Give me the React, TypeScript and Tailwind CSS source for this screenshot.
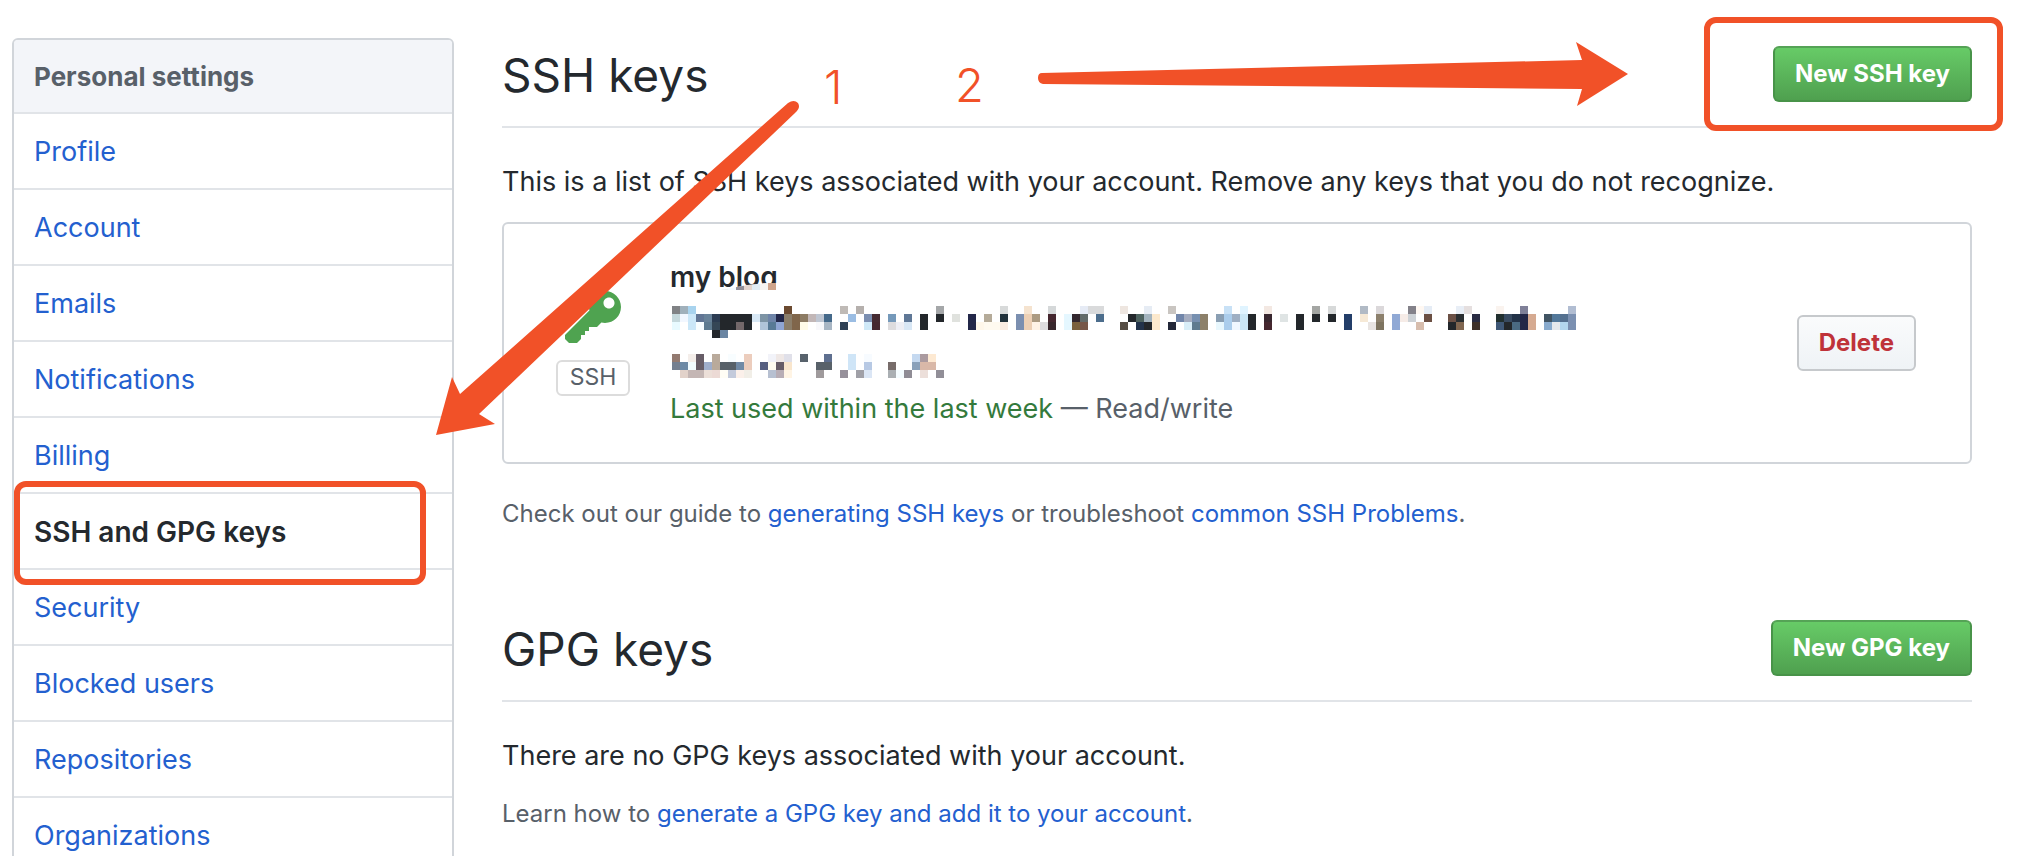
import type { ReactNode } from 'react';

const NAV = [
  'Profile',
  'Account',
  'Emails',
  'Notifications',
  'Billing',
  'SSH and GPG keys',
  'Security',
  'Blocked users',
  'Repositories',
  'Organizations',
];

const CELL = 8;

/* Each row lists "column colour" pairs; "a-b colour" fills a run of cells. */
const FINGERPRINT_ROWS = [
  '0 808285,1 a0b0bb,2 a8d3ee,14 6b4a30,21 bfbab6,23 b5b0ad,33 a5a7a9,41 d8dada,44 f5e3cf,47 d5d8d9,51 e6ebf5,52-53 d9dadb,56 eee6e0,59 e6ecf4,62 c9c5c1,69 c8e1f6,71 e0f4ff,74 f3e8e2,80 a4a6a3,82 d7d9d9,86 b1bac5,88 dbd8da,92 838189,93 fff8f2,94 e5ecf5,98 e8eef6,99 e5dfdf,103 faf3ee,106 7f8098,112 b1bdd2',
  '0 c5d8dc,1 f2f7ff,2 cbe7f8,3 617594,4 688299,5 2c3c52,6-9 23272b,10 d8e8f5,11 7d94a5,12 6e84a8,13 23284a,14 8b7e6a,15 80664b,16 8c7b63,17 c2b7b7,18 bfc6d2,19 45698a,22 9bbde3,24 7b8eb0,25 452a31,27 7599ba,29 5f7796,31 23272b,33 23272b,35 e0e2de,37 232849,39 b5ab99,41 21323c,43 7b8fb0,44 edd0b5,45 ac9b82,47 45272f,49 e5f7ff,50 33272e,51 636b69,53 4c6d8c,57 23272b,58 4d625f,59 a2b3be,60 fce9cd,63 7186aa,64 a5adc0,65 7790b0,66 8c806a,68 8a9fb3,69 abcdec,70 9fafc3,71 cbe7f6,72 23272b,74 38272f,76 dfe4e4,78 23272b,80 23272b,82 23272b,84 233e69,86 f6e9d6,88 8c806c,90 90a9d5,91 f6ece7,92 cdd2d6,94 6b4f43,97 6b5045,98 2a2e31,100 292b42,103 22302f,104 384a60,105 223248,106 232747,107 d5aa91,109 415463,110 53789a,111 54708f,112 7b90b1',
  '0 e8faff,2 cbe7f8,3 f8fdff,4 5f7b91,5 354656,6-7 23272b,8 73686a,9 23272b,11 b0c4d9,12 587a96,13 8fa5d3,14 8b7e6a,15 80664b,16 fffbe8,18 f8f8fb,19 a8b6c4,21 2d4056,24 cfe9f8,25 45272f,27 dddcde,28 eeeff5,29 d8e7f5,31 23272b,37 232849,38 fff7ea,39-40 fffaf0,41 f8ebe2,43 7b8fb0,44 edd0b5,45 fff3e6,46 dedcde,47 38272c,49 e5f7ff,50 7a603d,51 775748,56 564e45,58 22334b,59 23272b,60 fce9cd,62 232839,64 d9eef8,65 5f7b8f,66 8c806a,68 e8f7fd,69 abcdec,70 f0f7ff,71 cbe7f6,72 23272b,74 45272f,78 23272b,84 233e69,87 e8e4e2,88 7e7460,90 90a9d5,93 d7bdad,97 23272b,98 806650,100 3e302a,103 3f5877,104 23272b,105 4a6a82,106 232747,107 d5aa91,109 88aacd,110 e5e8ec,111 b3d7ee,112 7b90b1',
  '5 23272b,6 6b86a3',
  '',
  '',
  '0 937a70,2 f4eeea,3 675d67,5 b9aa9b,7 f8fdff,9 eccdbd,12 f2f3f9,13 efe8e6,14 e0e0e9,16 58626c,19 5e6f8f,22 cfe5f7,24 f7fbff,30 c5d9f0,31 ab9a9f,32 fde9d2',
  '0 747f8f,1 6d8aa6,2 f2fcff,3 675d67,4 9faecb,5 b9aa9b,6-7 586169,8 718aa6,9 eccdbd,11 565f7f,12 fffcf0,13 675d67,14 f9e6cd,18-19 586169,22 cfe5f7,24 b7c9e4,27 776c6a,30 8aa1ba,31-32 d9b8a8',
  '1 e2d2ca,2-3 c4b6b4,4 ecdfd8,5 ecdad5,6 fffdf5,7 c3cadb,8 fbf0ea,9 f1eee7,12 b7c0d1,13 b8adb5,14 fff4e4,18 9f9a9c,21 96909a,23 a0a0a7,24 dbe6f5,27 aaafb3,28 f4fcff,29 8f8c95,31 ecdfda,33 918e97',
];

function MosaicFingerprint() {
  return (
    <svg width="904" height="72" viewBox="0 0 904 72" shapeRendering="crispEdges" className="ml-0.5 block" aria-hidden="true">
      {FINGERPRINT_ROWS.flatMap((row, y) =>
        row
          .split(',')
          .filter(Boolean)
          .map((entry) => {
            const [range, color] = entry.split(' ');
            const [from, to = from] = range.split('-').map(Number);
            return (
              <rect
                key={`${y}-${from}`}
                x={from * CELL}
                y={y * CELL}
                width={(to - from + 1) * CELL}
                height={CELL}
                fill={`#${color}`}
              />
            );
          }),
      )}
    </svg>
  );
}

/* Blurred strip that hides the lower edge of the key's title. */
function TitleMosaic() {
  return (
    <svg width="64" height="20" viewBox="0 0 64 20" className="absolute top-7 left-[50px]" aria-hidden="true">
      <clipPath id="strip">
        <path d="M0 7 L28 2 L58 -1 V20 H0Z" />
      </clipPath>
      <g clipPath="url(#strip)">
        <rect width="64" height="20" fill="#fff" />
        <rect width="8" height="7" fill="#eef2f3" />
        <rect x="8" width="8" height="7" fill="#f4fafd" />
        <rect x="16" width="8" height="7" fill="#918e97" />
        <rect x="24" width="8" height="7" fill="#e3d5ce" />
        <rect x="32" width="8" height="7" fill="#e0ecf5" />
        <rect x="40" width="8" height="7" fill="#f6f4f1" />
        <rect x="48" width="8" height="7" fill="#cfa58c" />
      </g>
    </svg>
  );
}

function KeyIcon() {
  return (
    <svg width="56" height="64" viewBox="0 0 14 16" fill="#4fa350" aria-hidden="true">
      <path
        fillRule="evenodd"
        d="M12.83 2.17C12.08 1.42 11.14 1.03 10 1c-1.13.03-2.08.42-2.83 1.17S6.04 3.86 6.01 5c0 .3.03.59.09.89L0 12v1l1 1h2l1-1v-1h1v-1h1v-1h2l1.09-1.11c.3.08.59.11.91.11 1.14-.03 2.08-.42 2.83-1.17S13.97 6.14 14 5c-.03-1.14-.42-2.08-1.17-2.83zM11 5.38c-.77 0-1.38-.61-1.38-1.38 0-.77.61-1.38 1.38-1.38.77 0 1.38.61 1.38 1.38 0 .77-.61 1.38-1.38 1.38z"
      />
    </svg>
  );
}

function SectionHeader({ title, action, boxed }: { title: string; action: string; boxed?: boolean }) {
  return (
    <div className="flex h-[90px] items-start justify-between border-b-2 border-[#e1e4e8]">
      <h2 className="text-[46px] leading-[74px] font-normal">{title}</h2>
      <div className="relative mt-2">
        <button
          type="button"
          className="block h-14 rounded-md border-2 border-[#489349] border-t-[#55a356] bg-linear-to-b from-[#67cb67] to-[#4fa04f] px-5 text-2xl leading-[52px] font-bold text-white"
        >
          {action}
        </button>
        {boxed && (
          <span className="pointer-events-none absolute -top-[29px] -right-[31px] h-[114px] w-[299px] rounded-[12px] border-6 border-[#f15128]" />
        )}
      </div>
    </div>
  );
}

function TextLink({ children }: { children: ReactNode }) {
  return (
    <a href="#" className="text-[#2360cf]">
      {children}
    </a>
  );
}

export default function App() {
  return (
    <div className="relative h-screen overflow-hidden bg-white font-['Inter',sans-serif] text-[27px] text-[#24292e]">
      <div className="flex items-start gap-12 pt-[38px] pr-12 pl-3">
        <nav className="w-[442px] shrink-0 rounded-md border-2 border-[#d1d5da]">
          <h3 className="h-[74px] rounded-t-sm border-b-2 border-[#e1e4e8] bg-[#f3f5f9] px-5 text-[26px] leading-[74px] font-bold text-[#586069]">
            Personal settings
          </h3>
          <ul>
            {NAV.map((item) => (
              <li key={item} className="relative h-[76px] border-b-2 border-[#e1e4e8] last:border-b-0">
                <a
                  href="#"
                  className={
                    item === 'SSH and GPG keys'
                      ? 'block px-5 text-[28px] leading-[76px] font-semibold text-[#24292e]'
                      : 'block px-5 leading-[76px] text-[#2360cf]'
                  }
                >
                  {item}
                </a>
                {item === 'SSH and GPG keys' && (
                  <span className="pointer-events-none absolute -top-[13px] left-0 z-10 h-[104px] w-[412px] rounded-[12px] border-6 border-[#f15128]" />
                )}
              </li>
            ))}
          </ul>
        </nav>

        <main className="min-w-0 flex-1">
          <section>
            <SectionHeader title="SSH keys" action="New SSH key" boxed />
            <p className="mt-8 leading-[44px]">
              This is a list of SSH keys associated with your account. Remove any keys that you do not recognize.
            </p>

            <div className="mt-[18px] flex h-[242px] items-center rounded-md border-2 border-[#d1d5da] pr-[54px] pl-[52px]">
              <div className="flex w-[74px] flex-col items-center gap-[9px] pb-1">
                <KeyIcon />
                <span className="flex h-9 w-full items-center justify-center rounded-md border-2 border-[#dcdcdc] text-[23px] text-[#586069]">
                  SSH
                </span>
              </div>
              <div className="ml-10 flex-1">
                <div className="relative h-11 text-[28px] leading-[44px]">
                  <strong className="font-semibold">my blog</strong>
                  <TitleMosaic />
                </div>
                <div className="pt-[7px] pb-[9px]">
                  <MosaicFingerprint />
                </div>
                <p className="leading-[44px] text-[#586069]">
                  <span className="text-[#347a3c]">Last used within the last week</span> — Read/write
                </p>
              </div>
              <button
                type="button"
                className="h-14 rounded-md border-2 border-[#c6c9cc] bg-linear-to-b from-[#fafbfc] to-[#eff3f6] px-5 text-2xl leading-[52px] font-bold text-[#bf3239]"
              >
                Delete
              </button>
            </div>

            <p className="mt-8 text-2xl leading-9 text-[#586069]">
              Check out our guide to <TextLink>generating SSH keys</TextLink> or troubleshoot{' '}
              <TextLink>common SSH Problems</TextLink>.
            </p>
          </section>

          <section className="mt-20">
            <SectionHeader title="GPG keys" action="New GPG key" />
            <p className="mt-8 leading-[44px]">There are no GPG keys associated with your account.</p>
            <p className="mt-[18px] text-2xl leading-9 text-[#586069]">
              Learn how to <TextLink>generate a GPG key and add it to your account</TextLink>.
            </p>
          </section>
        </main>
      </div>

      <svg
        width="2020"
        height="856"
        viewBox="0 0 2020 856"
        fill="#f15128"
        className="pointer-events-none absolute top-0 left-0"
        aria-hidden="true"
      >
        <path d="M788 103 Q794 99 798 103 Q801 108 795 113 L479 414 L495 424 L436 435 L452 377 L460 394Z" />
        <path d="M1042 73 L1582 60 L1576 42 L1628 74 L1577 106 L1582 89 L1043 84 Q1038 83 1038 78 Q1038 73 1042 73Z" />
      </svg>
      <span className="absolute top-[58px] left-[824px] text-[47px] leading-[58px] font-light text-[#f15128]">1</span>
      <span className="absolute top-[56px] left-[955px] text-[47px] leading-[58px] font-light text-[#f15128]">2</span>
    </div>
  );
}
